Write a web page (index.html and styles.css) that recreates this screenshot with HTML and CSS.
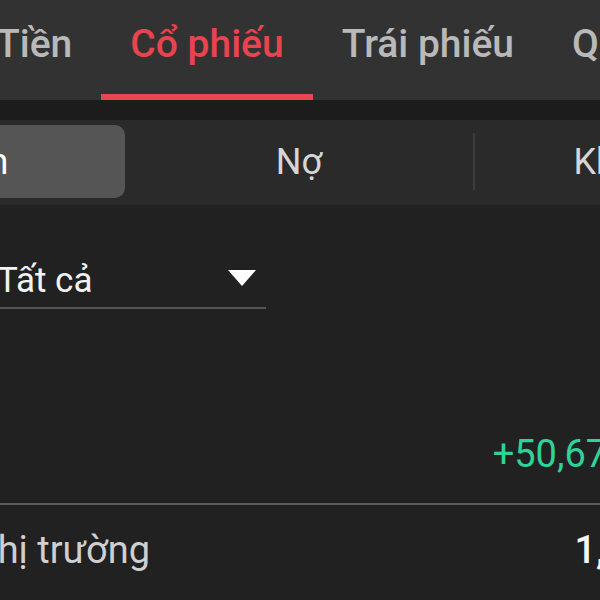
FILE: index.html
```html
<!DOCTYPE html>
<html lang="vi">
<head>
  <meta charset="UTF-8">
  <meta name="viewport" content="width=device-width, initial-scale=1.0">
  <title>Danh mục - Cổ phiếu</title>
  <link rel="stylesheet" href="styles.css">
</head>
<body>
  <!-- Tab loại tài sản -->
  <div class="tabs">
    <div class="tab">Tiền</div>
    <div class="tab active">Cổ phiếu</div>
    <div class="tab">Trái phiếu</div>
    <div class="tab">Quỹ</div>
  </div>
  <div class="strip"></div>

  <!-- Tài sản / Nợ / Khả dụng -->
  <div class="segments">
    <div class="segment selected">Tài sản</div>
    <div class="segment">Nợ</div>
    <div class="segment divided">Khả dụng</div>
  </div>

  <div class="main">
    <div class="filter">
      <div class="select">
        <span class="select-text">Tất cả</span>
        <svg class="select-arrow" width="28" height="16" viewBox="0 0 28 16">
          <path d="M0 0 L28 0 L14 16 Z" fill="#fff"/>
        </svg>
      </div>
    </div>

    <div class="row row-profit">
      <span class="row-label">Lãi/lỗ</span>
      <span class="row-value up">+50,678,000</span>
    </div>
    <div class="row row-market">
      <span class="row-label">Giá trị thị trường</span>
      <span class="row-value">1,250,000,000</span>
    </div>
  </div>
</body>
</html>
```

FILE: styles.css
```css
html, body {
  margin: 0;
  height: 100%;
}
body {
  font-family: Roboto, "Noto Sans", "Liberation Sans", sans-serif;
  background: #212121;
  color: #ddd;
  overflow: hidden;
  width: 600px;
}

/* tab trên cùng */
.tabs {
  display: flex;
  background: #323232;
  height: 100px;
  margin-left: -33px;
  white-space: nowrap;
}
.tab {
  padding: 0 29px;
  font-size: 39px;
  font-weight: 500;
  color: #b9b9b9;
  line-height: 88px;
  border-bottom: 6px solid transparent;
  box-sizing: border-box;
  height: 100px;
}
.tab.active {
  color: #e8444f;
  border-bottom-color: #ea4553;
}
.strip {
  height: 20px;
  background: #1c1c1c;
}

/* segment control */
.segments {
  display: flex;
  background: #2a2a2a;
  height: 85px;
  padding: 5px 0 7px;
  box-sizing: border-box;
  margin-left: -223px;
  white-space: nowrap;
}
.segment {
  flex: 0 0 348px;
  display: flex;
  align-items: center;
  justify-content: center;
  font-size: 36px;
  color: #d6d6d6;
}
.segment.selected {
  background: #555;
  border-radius: 10px;
  color: #fff;
}
.segment.divided {
  border-left: 2px solid #3c3c3c;
  margin: 8px 0;
  padding-right: 14px;
}

/* nội dung */
.main {
  background: #212121;
}
.filter {
  padding-top: 48px;
}
.select {
  display: flex;
  align-items: center;
  justify-content: space-between;
  width: 269px;
  margin-left: -3px;
  height: 56px;
  border-bottom: 2px solid #555;
  padding-right: 10px;
  box-sizing: border-box;
}
.select-text {
  font-size: 35px;
  color: #f2f2f2;
}
.select-arrow {
  margin-top: -4px;
}

.row {
  display: flex;
  justify-content: space-between;
  align-items: center;
  white-space: nowrap;
  font-size: 38px;
}
.row-profit {
  margin: 108px -100px 0 -330px;
  height: 88px;
  border-bottom: 2px solid #5c5c5c;
  padding-bottom: 12px;
  box-sizing: border-box;
}
.row-profit .row-label {
  visibility: hidden;
}
.row-value.up {
  color: #2fd39a;
}
.row-market {
  margin: 0 -216px 0 -124px;
  height: 90px;
}
.row-market .row-label {
  color: #cfcfcf;
}
.row-market .row-value {
  color: #f5f5f5;
  font-weight: 500;
}
```
